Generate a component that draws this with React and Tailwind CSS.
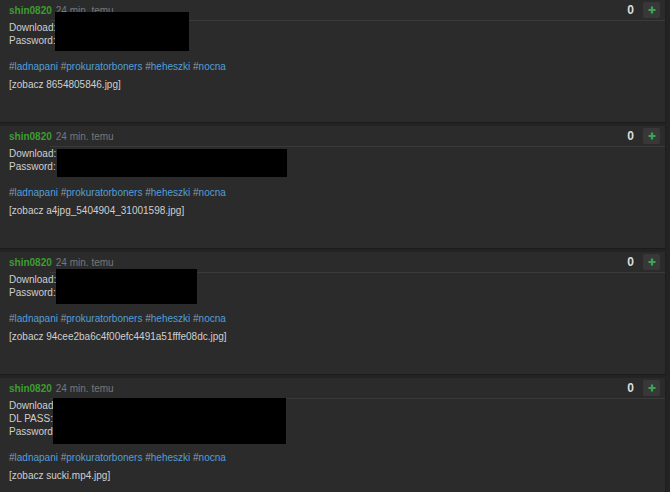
import React from 'react';

const entries = [
  {
    lines: ['Download:', 'Password:'],
    file: '8654805846.jpg',
    box: { left: 55, top: 12, width: 134, height: 39 },
  },
  {
    lines: ['Download:', 'Password:'],
    file: 'a4jpg_5404904_31001598.jpg',
    box: { left: 57, top: 23, width: 230, height: 28 },
  },
  {
    lines: ['Download:', 'Password:'],
    file: '94cee2ba6c4f00efc4491a51fffe08dc.jpg',
    box: { left: 56, top: 17, width: 141, height: 35 },
  },
  {
    lines: ['Download', 'DL PASS:', 'Password'],
    file: 'sucki.mp4.jpg',
    box: { left: 53, top: 20, width: 233, height: 46 },
  },
];

const tags = ['ladnapani', 'prokuratorboners', 'heheszki', 'nocna'];

const Entry = ({ entry }) => (
  <div className="relative bg-[#2b2b2b] border-b border-[#1b1b1b] mb-[3px] mr-[4px] border-r border-r-[#1e1e1e]">
    <div className="h-[20px] flex items-center pl-[9px] pr-[5px]">
      <span className="text-[10px] font-bold text-[#3e9c32]">shin0820</span>
      <span className="text-[10px] text-[#777] ml-[4px]">24 min. temu</span>
      <span className="ml-auto text-[12px] font-bold text-[#dcdcdc] mr-[9px]">0</span>
      <span className="w-[17px] h-[16px] bg-[#383838] rounded-[2px] flex items-center justify-center mt-[-1px]">
        <svg width="8" height="8" viewBox="0 0 8 8">
          <path d="M4 0.5v7M0.5 4h7" stroke="#3aa655" strokeWidth="2.2" />
        </svg>
      </span>
    </div>
    <div className="ml-[50px] border-t border-[#3a3a3a]" />
    <div className="pl-[9px] pb-[31px] text-[10px] leading-[13px] text-[#cfcfcf]">
      {entry.lines.map((l) => (
        <div key={l}>{l}</div>
      ))}
      <div className="h-[13px]" />
      <div>
        {tags.map((t, i) => (
          <span key={t}>
            <span className="text-[#9a9a9a]">#</span>
            <span className="text-[#529fd8]">{t}</span>
            {i < tags.length - 1 ? ' ' : ''}
          </span>
        ))}
      </div>
      <div className="mt-[5px]">[zobacz {entry.file}]</div>
    </div>
    <div
      className="absolute bg-black"
      style={{ left: entry.box.left, top: entry.box.top, width: entry.box.width, height: entry.box.height }}
    />
  </div>
);

export default function App() {
  return (
    <div
      className="w-[670px] h-[492px] overflow-hidden bg-[#232323]"
      style={{ fontFamily: '"Liberation Sans", Arial, sans-serif' }}
    >
      {entries.map((e, i) => (
        <Entry key={i} entry={e} />
      ))}
    </div>
  );
}
